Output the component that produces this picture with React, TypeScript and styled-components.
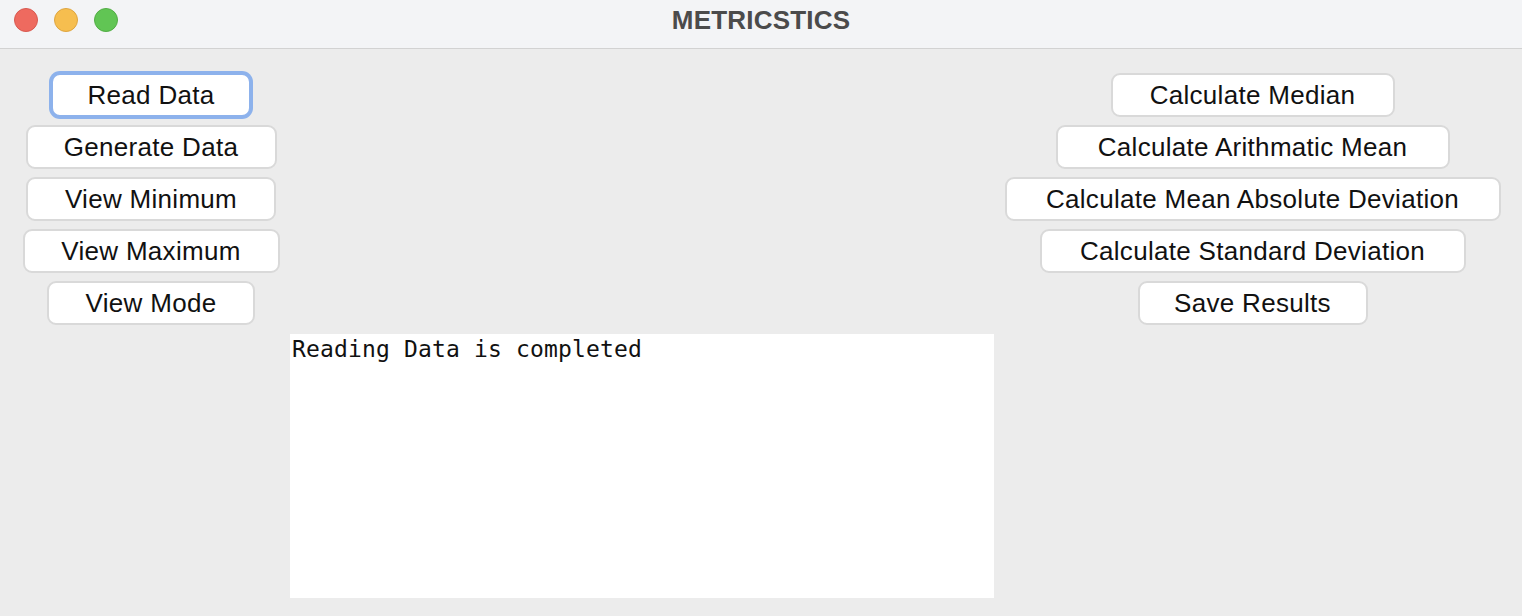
import styled, { createGlobalStyle } from 'styled-components';

const GlobalStyle = createGlobalStyle`
  html, body {
    margin: 0;
    padding: 0;
    background: #ececec;
  }
  * {
    box-sizing: border-box;
  }
`;

const Window = styled.div`
  width: 1522px;
  height: 616px;
  display: flex;
  flex-direction: column;
  background: #ececec;
  font-family: 'Liberation Sans', Arial, sans-serif;
  overflow: hidden;
`;

const TitleBar = styled.div`
  position: relative;
  height: 49px;
  flex-shrink: 0;
  display: flex;
  align-items: center;
  justify-content: center;
  background: #f3f4f6;
  border-bottom: 1px solid #d2d2d2;
`;

const Lights = styled.div`
  position: absolute;
  left: 14px;
  top: 8px;
  display: flex;
  gap: 16px;
`;

const Light = styled.span<{ $fill: string; $edge: string }>`
  width: 24px;
  height: 24px;
  border-radius: 50%;
  background: ${({ $fill }) => $fill};
  border: 1px solid ${({ $edge }) => $edge};
`;

const Title = styled.h1`
  margin: 0;
  margin-top: -8px;
  font-size: 26px;
  font-weight: 700;
  color: #4b4b4b;
  letter-spacing: 0.2px;
`;

const Content = styled.div`
  display: flex;
  flex-direction: column;
  padding-top: 24px;
`;

const ButtonArea = styled.div`
  display: grid;
  grid-template-columns: 302px 1fr 539px;
`;

const Column = styled.div`
  display: flex;
  flex-direction: column;
  align-items: center;
  gap: 8px;
`;

const Button = styled.button<{ $width: number; $focused?: boolean }>`
  width: ${({ $width }) => $width}px;
  height: 44px;
  padding: 0;
  border-radius: 9px;
  background: #ffffff;
  border: 2px solid ${({ $focused }) => ($focused ? '#8db2ec' : '#d9d9d9')};
  box-shadow: ${({ $focused }) => ($focused ? '0 0 0 2px #8db2ec' : 'none')};
  font-family: 'Liberation Sans', Arial, sans-serif;
  font-size: 26px;
  letter-spacing: 0.3px;
  color: #111111;
  text-align: center;
  line-height: 40px;
  cursor: pointer;
`;

const Output = styled.div`
  margin-top: 9px;
  margin-left: 290px;
  width: 704px;
  height: 264px;
  background: #ffffff;
  padding: 2px 2px;
  font-family: 'DejaVu Sans Mono', 'Liberation Mono', monospace;
  font-size: 23px;
  letter-spacing: 0.15px;
  line-height: 27px;
  color: #111111;
  white-space: pre;
`;

const leftButtons = [
  { label: 'Read Data', width: 200, focused: true },
  { label: 'Generate Data', width: 251 },
  { label: 'View Minimum', width: 250 },
  { label: 'View Maximum', width: 257 },
  { label: 'View Mode', width: 208 },
];

const rightButtons = [
  { label: 'Calculate Median', width: 284 },
  { label: 'Calculate Arithmatic Mean', width: 394 },
  { label: 'Calculate Mean Absolute Deviation', width: 496 },
  { label: 'Calculate Standard Deviation', width: 426 },
  { label: 'Save Results', width: 230 },
];

const App = () => {
  return (
    <>
      <GlobalStyle />
      <Window>
        <TitleBar>
          <Lights>
            <Light $fill="#ee6a5f" $edge="#d85950" />
            <Light $fill="#f6be4f" $edge="#dea540" />
            <Light $fill="#61c554" $edge="#52ad45" />
          </Lights>
          <Title>METRICSTICS</Title>
        </TitleBar>
        <Content>
          <ButtonArea>
            <Column>
              {leftButtons.map((b) => (
                <Button key={b.label} $width={b.width} $focused={b.focused}>
                  {b.label}
                </Button>
              ))}
            </Column>
            <div />
            <Column>
              {rightButtons.map((b) => (
                <Button key={b.label} $width={b.width}>
                  {b.label}
                </Button>
              ))}
            </Column>
          </ButtonArea>
          <Output>Reading Data is completed</Output>
        </Content>
      </Window>
    </>
  );
};

export default App;
